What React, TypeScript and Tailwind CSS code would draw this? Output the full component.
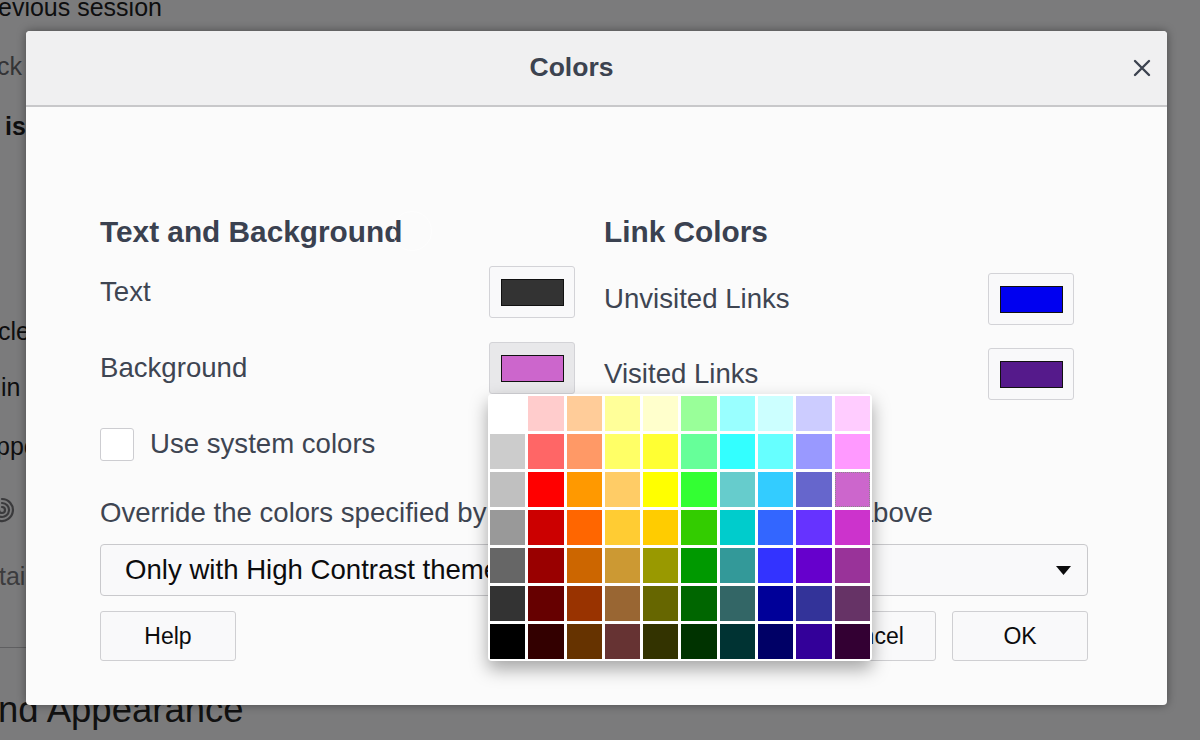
import React from 'react';

const PALETTE: string[][] = [
  ['#ffffff', '#ffcccc', '#ffcc99', '#ffff99', '#ffffcc', '#99ff99', '#99ffff', '#ccffff', '#ccccff', '#ffccff'],
  ['#cccccc', '#ff6666', '#ff9966', '#ffff66', '#ffff33', '#66ff99', '#33ffff', '#66ffff', '#9999ff', '#ff99ff'],
  ['#c0c0c0', '#ff0000', '#ff9900', '#ffcc66', '#ffff00', '#33ff33', '#66cccc', '#33ccff', '#6666cc', '#cc66cc'],
  ['#999999', '#cc0000', '#ff6600', '#ffcc33', '#ffcc00', '#33cc00', '#00cccc', '#3366ff', '#6633ff', '#cc33cc'],
  ['#666666', '#990000', '#cc6600', '#cc9933', '#999900', '#009900', '#339999', '#3333ff', '#6600cc', '#993399'],
  ['#333333', '#660000', '#993300', '#996633', '#666600', '#006600', '#336666', '#000099', '#333399', '#663366'],
  ['#000000', '#330000', '#663300', '#663333', '#333300', '#003300', '#003333', '#000066', '#330099', '#330033'],
];

const SELECTED = '#cc66cc';

const Swatch: React.FC<{ color: string; pressed?: boolean }> = ({ color, pressed }) => (
  <button
    className={`flex h-[52px] w-[86px] items-center justify-center rounded-[3px] border border-[#d3d3d7] ${
      pressed ? 'bg-[#e8e8ea]' : 'bg-[#f9f9fa]'
    }`}
  >
    <span className="block h-[27px] w-[63px] border border-[#111]" style={{ backgroundColor: color }} />
  </button>
);

const ColorPopup: React.FC = () => (
  <div className="absolute left-[-1px] top-full z-10 w-[384px] rounded-[4px] bg-white p-[2px] shadow-[0_8px_18px_rgba(0,0,0,0.35)]">
    <div className="grid grid-cols-10 gap-[3px]">
      {PALETTE.flat().map((c, i) => (
        <div
          key={i}
          className={`h-[35px] ${c === SELECTED ? 'border border-dotted border-[#8a8a8a]' : ''}`}
          style={{ backgroundColor: c }}
        />
      ))}
    </div>
  </div>
);

export default function App() {
  return (
    <div
      className="relative h-[740px] w-[1200px] overflow-hidden bg-[#7b7b7c]"
      style={{ fontFamily: '"Liberation Sans", Arial, sans-serif' }}
    >
      {/* page behind the modal */}
      <div className="flex flex-col text-[25px] text-[#0e0e0f]">
        <div className="-mt-[8px] flex h-[32px] items-center -ml-[2px]">evious session</div>
        <div className="mt-[27px] flex h-[32px] items-center -ml-[3px] text-[#343436]">ck</div>
        <div className="mt-[28px] flex h-[32px] items-center ml-[5px] font-bold">is</div>
        <div className="mt-[173px] flex h-[32px] items-center -ml-[2px]">cle</div>
        <div className="mt-[24px] flex h-[32px] items-center ml-[1px]">in</div>
        <div className="mt-[27px] flex h-[32px] items-center -ml-[4px]">ppe</div>
        <div className="mt-[31px] flex h-[32px] items-center -ml-[12px]">
          <svg width="28" height="28" viewBox="0 0 28 28" fill="none" stroke="#3a3a3c" strokeWidth="2.2" strokeLinecap="round">
            <path d="M14 3a11 11 0 1 1 -10.5 7.5" />
            <path d="M14 7a7 7 0 1 1 -6.8 5.4" />
            <path d="M14 11a3 3 0 1 1 -3 3" />
          </svg>
        </div>
        <div className="mt-[35px] flex h-[32px] items-center -ml-[1px] text-[#3c3c3e]">tai</div>
        <div className="mt-[54px] h-px w-[40px] bg-[#5f5f61]" />
        <div className="mt-[40px] flex h-[44px] items-center -ml-[2px] text-[36.5px] text-[#111]">nd Appearance</div>
      </div>

      {/* modal dialog */}
      <div className="absolute left-[26px] top-[31px] flex w-[1141px] flex-col rounded-[4px] bg-[#fbfbfb] shadow-[0_0_10px_rgba(0,0,0,0.4)]">
        <div className="grid h-[76px] grid-cols-[1fr_auto_1fr] items-center rounded-t-[4px] border-b-2 border-[#c8c8ca] bg-[#f0f0f1]">
          <div />
          <h1 className="mr-[50px] text-[26.5px] font-bold text-[#3c4350]">Colors</h1>
          <div className="flex justify-end pr-[16px]">
            <button className="flex h-[18px] w-[18px] items-center justify-center">
              <svg width="18" height="18" viewBox="0 0 18 18" stroke="#3c4350" strokeWidth="2.4" strokeLinecap="round">
                <path d="M2 2 16 16M16 2 2 16" />
              </svg>
            </button>
          </div>
        </div>

        <div className="flex flex-col pb-[44px] pl-[74px] pr-[79px] pt-[107px] text-[27.6px] text-[#3e4552]">
          <div className="flex items-start">
            {/* Text and Background */}
            <div className="flex w-[489px] flex-col pr-[14px]">
              <h2 className="relative text-[29.8px] font-bold leading-[36px] text-[#3a4150]">
                Text and Background
                <span className="absolute left-[292px] top-[-3px] h-[40px] w-[40px] rounded-full border border-white/50" />
              </h2>
              <div className="mt-[16px] flex h-[52px] items-center justify-between">
                <span>Text</span>
                <Swatch color="#333333" />
              </div>
              <div className="mt-[24px] flex h-[52px] items-center justify-between">
                <span>Background</span>
                <div className="relative">
                  <Swatch color={SELECTED} pressed />
                  <ColorPopup />
                </div>
              </div>
            </div>

            {/* Link Colors */}
            <div className="ml-[15px] flex w-[484px] flex-col pr-[14px]">
              <h2 className="text-[29.8px] font-bold leading-[36px] text-[#3a4150]">Link Colors</h2>
              <div className="mt-[23px] flex h-[52px] items-center justify-between">
                <span>Unvisited Links</span>
                <Swatch color="#0000f0" />
              </div>
              <div className="mt-[23px] flex h-[52px] items-center justify-between">
                <span>Visited Links</span>
                <Swatch color="#551a8b" />
              </div>
            </div>
          </div>

          <label className="mt-[27px] flex h-[34px] items-center gap-[16px]">
            <span className="block h-[33px] w-[34px] rounded-[3px] border border-[#cdcdd1] bg-white" />
            <span>Use system colors</span>
          </label>

          <p className="mt-[36px] whitespace-nowrap leading-[32px]">
            Override the colors specified by the page with your selections above
          </p>

          <div className="mt-[15px] flex h-[52px] items-center justify-between rounded-[4px] border border-[#c9c9cc] bg-[#f9f9fa] pl-[24px] pr-[16px] text-[#0c0c0d]">
            <span>Only with High Contrast themes</span>
            <svg width="15" height="9" viewBox="0 0 15 9">
              <polygon points="0,0 15,0 7.5,9" fill="#0c0c0d" />
            </svg>
          </div>

          <div className="mt-[15px] flex items-center justify-between text-[23px] text-[#0c0c0d]">
            <button className="h-[50px] w-[136px] rounded-[3px] border border-[#cfcfd2] bg-[#f9f9fa]">Help</button>
            <div className="flex gap-[16px]">
              <button className="h-[50px] w-[136px] rounded-[3px] border border-[#cfcfd2] bg-[#f9f9fa]">Cancel</button>
              <button className="h-[50px] w-[136px] rounded-[3px] border border-[#cfcfd2] bg-[#f9f9fa]">OK</button>
            </div>
          </div>
        </div>
      </div>
    </div>
  );
}
